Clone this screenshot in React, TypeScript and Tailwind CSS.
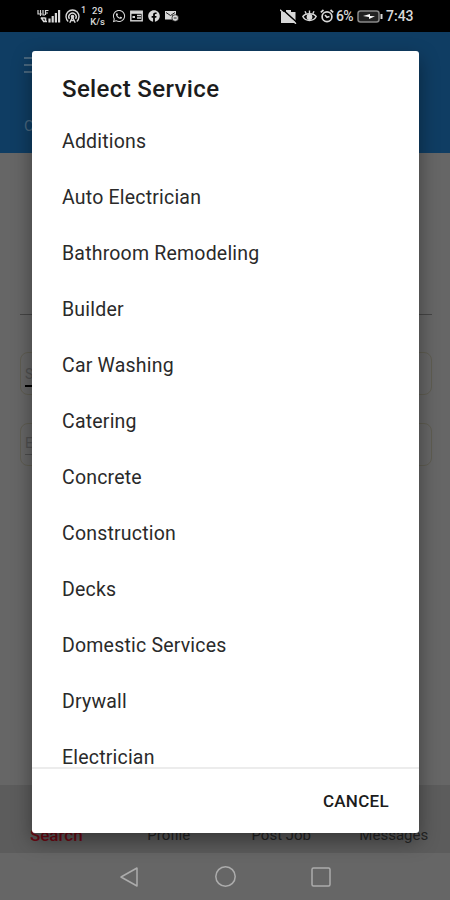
import { FaWhatsapp, FaFacebook } from 'react-icons/fa';

const services = [
  'Additions',
  'Auto Electrician',
  'Bathroom Remodeling',
  'Builder',
  'Car Washing',
  'Catering',
  'Concrete',
  'Construction',
  'Decks',
  'Domestic Services',
  'Drywall',
  'Electrician',
];

const tabs = ['Search', 'Profile', 'Post Job', 'Messages'];

function StatusBar() {
  return (
    <div className="flex h-8 shrink-0 items-center bg-black pl-[37px] text-[#d8d8d8]">
      <svg width="24" height="16" viewBox="0 0 24 16" fill="none" stroke="currentColor">
        <path d="M1 2v4h4M3.500 2v6M6 2v5h2M8.500 2.500h3M8.500 5h2.500M8.500 2v5" strokeWidth="1.200" />
        <path d="M4 9.500l2.500 3.500M5 10h3M8.500 9.500v4.500M6 13.500h4" strokeWidth="1.600" />
        <path d="M12.500 14.500v-4M15.700 14.500V8M18.900 14.500V5M22.100 14.500V2" strokeWidth="2.200" />
      </svg>
      <svg className="ml-1" width="15" height="15" viewBox="0 0 15 15" fill="none" stroke="currentColor" strokeWidth="1.400">
        <path d="M3.200 12.400a6.500 6.500 0 1 1 8.600 0" />
        <path d="M4.400 9.800a3.700 3.700 0 1 1 6.200 0" />
        <circle cx="7.500" cy="7.500" r="1.100" fill="currentColor" />
        <path d="M7.500 8l-2.700 5.800M7.500 8l2.700 5.800M5.700 11.500h3.600" />
      </svg>
      <span className="-mt-[11px] ml-[1px] w-[6px] text-[9px] leading-none font-medium">1</span>
      <div className="ml-[1px] flex w-[19px] flex-col items-center text-[9.500px] leading-[11px] font-medium">
        <span>29</span>
        <span>K/s</span>
      </div>
      <FaWhatsapp className="ml-[5px] h-[14px] w-[14px]" />
      <svg className="ml-[4px]" width="13" height="12" viewBox="0 0 13 12" fill="none" stroke="currentColor">
        <rect x="0.800" y="1.200" width="11.400" height="9.600" strokeWidth="1.400" />
        <path d="M1 2.800h11" strokeWidth="2" />
        <path d="M7 5.500h4M7 8h4" strokeWidth="1.300" />
        <path d="M2.500 7h2.500" strokeWidth="2" />
      </svg>
      <FaFacebook className="ml-[5px] h-[12px] w-[12px]" />
      <svg className="ml-[5px]" width="14" height="12" viewBox="0 0 14 12">
        <path d="M0 1h11v4.500H7V9.500H0z" fill="currentColor" />
        <path d="M1 2.500l4.500 3 4.500-3" fill="none" stroke="#222" strokeWidth="1" />
        <circle cx="10.200" cy="8" r="3.300" fill="currentColor" stroke="#111" strokeWidth="0.700" />
        <path d="M8.800 8h2.800" stroke="#222" strokeWidth="1" />
      </svg>

      <svg className="ml-[101px]" width="17" height="15" viewBox="0 0 17 15">
        <path d="M1 3h5V1h5v2h4.500v11H1z" fill="currentColor" />
        <path d="M2 0l15 13.500" stroke="#000" strokeWidth="1.600" />
        <path d="M0 .8l16 14" stroke="currentColor" strokeWidth="1.300" />
      </svg>
      <svg className="ml-[5px]" width="15" height="14" viewBox="0 0 15 14" fill="none" stroke="currentColor" strokeWidth="1.400">
        <path d="M.8 7.500C3.500 3.800 11.500 3.800 14.200 7.500 11.500 12.800 3.500 12.800.8 7.500z" />
        <circle cx="7.500" cy="8" r="2.200" fill="currentColor" />
        <path d="M7.500 1.500v3M3 2.200l1.200 2.600M12 2.200l-1.200 2.600" />
      </svg>
      <svg className="ml-[3px]" width="14" height="14" viewBox="0 0 14 14" fill="none" stroke="currentColor" strokeWidth="1.700">
        <circle cx="7" cy="7.800" r="4.900" />
        <path d="M.8 3.300L3.500 1M13.200 3.300L10.500 1M5 6l2 2.200 2.500-.7" />
      </svg>
      <span className="ml-[2px] w-[19px] text-[14px] leading-none font-medium tracking-[-0.6px]">6%</span>
      <svg className="ml-[2px]" width="26" height="13" viewBox="0 0 26 13">
        <rect x="1" y="1" width="21" height="11" rx="2.500" fill="#222" stroke="#888" strokeWidth="1.500" />
        <path d="M24.500 4v5" stroke="currentColor" strokeWidth="2" />
        <path d="M6 6l7-2v2l5 .3-6 2.700v-2z" fill="#fff" />
      </svg>
      <span className="ml-[3px] text-[14px] leading-none font-medium">7:43</span>
    </div>
  );
}

function SearchScreen() {
  return (
    <div className="flex flex-1 flex-col bg-[#666666]">
      <div className="flex h-[121px] flex-col justify-between bg-[#0f3d63] px-6 pt-[25px] pb-[18px] text-[#48677f]">
        <div className="flex w-[20px] flex-col gap-[5px]">
          <div className="h-[2px] bg-current" />
          <div className="h-[2px] bg-current" />
          <div className="h-[2px] bg-current" />
        </div>
        <span className="text-[15px] leading-[18px]">Cleaner</span>
      </div>
      <div className="flex flex-1 flex-col pt-[161px] pr-[18px] pl-[20px]">
        <div className="h-px bg-[#454545]" />
        <div className="mt-[37px] h-[43px] rounded-lg border border-[#5f5d52] px-[4px] pt-[11px] text-[14px] leading-[21px] text-[#505050]">
          <div className="w-[300px] border-b-2 border-black">Select</div>
        </div>
        <div className="mt-[28px] h-[43px] rounded-lg border border-[#5f5d52] px-[4px] pt-[9px] text-[14px] leading-[21px] text-[#505050]">
          <div className="w-[300px] border-b border-[#4c4c4c]">Enter</div>
        </div>
      </div>
      <div className="grid h-[68px] grid-cols-4 bg-[#5c5c5c] pt-[40px] text-center text-[15px] leading-5 text-[#242424]">
        {tabs.map((tab, i) => (
          <span key={tab} className={i === 0 ? 'text-[17px] font-medium text-[#6e0a14]' : ''}>
            {tab}
          </span>
        ))}
      </div>
    </div>
  );
}

function NavigationBar() {
  return (
    <div className="flex h-[47px] shrink-0 items-center bg-[#666666] pl-[119px] text-[#acacac]">
      <svg width="20" height="22" viewBox="0 0 20 22" fill="none" stroke="currentColor" strokeWidth="1.500" strokeLinejoin="round">
        <path d="M18 2v18L2 11z" />
      </svg>
      <svg className="ml-[75px]" width="23" height="23" viewBox="0 0 23 23" fill="none" stroke="currentColor" strokeWidth="1.500">
        <circle cx="11.500" cy="11.500" r="9.700" />
      </svg>
      <svg className="ml-[74px]" width="20" height="20" viewBox="0 0 20 20" fill="none" stroke="currentColor" strokeWidth="1.500">
        <rect x="1" y="1" width="18" height="18" rx="1.500" />
      </svg>
    </div>
  );
}

function ServiceDialog() {
  return (
    <div
      role="dialog"
      className="absolute top-[51px] left-8 flex h-[782px] w-[387px] flex-col overflow-hidden rounded-[3px] bg-white shadow-[0_8px_20px_rgba(0,0,0,0.4)]"
    >
      <h1 className="h-[62px] shrink-0 pt-[23px] pl-[30px] text-[24px] leading-[30px] font-medium tracking-[0.36px] text-[#1c1c1c]">
        Select Service
      </h1>
      <ul className="min-h-0 flex-1 overflow-hidden">
        {services.map(service => (
          <li
            key={service}
            className="flex h-14 items-center pt-[2px] pl-[30px] text-[19.500px] leading-[18px] tracking-[0.2px] text-[#2a2a2a]"
          >
            {service}
          </li>
        ))}
      </ul>
      <div className="flex h-[66px] shrink-0 items-center justify-end border-t-2 border-[#ececec] pr-[30px]">
        <button className="pt-px text-[17px] font-medium tracking-[0.3px] text-[#1c1c1c]">CANCEL</button>
      </div>
    </div>
  );
}

export default function App() {
  return (
    <div className="relative flex h-[900px] w-[450px] flex-col overflow-hidden font-[Roboto,sans-serif]">
      <StatusBar />
      <SearchScreen />
      <NavigationBar />
      <ServiceDialog />
    </div>
  );
}
